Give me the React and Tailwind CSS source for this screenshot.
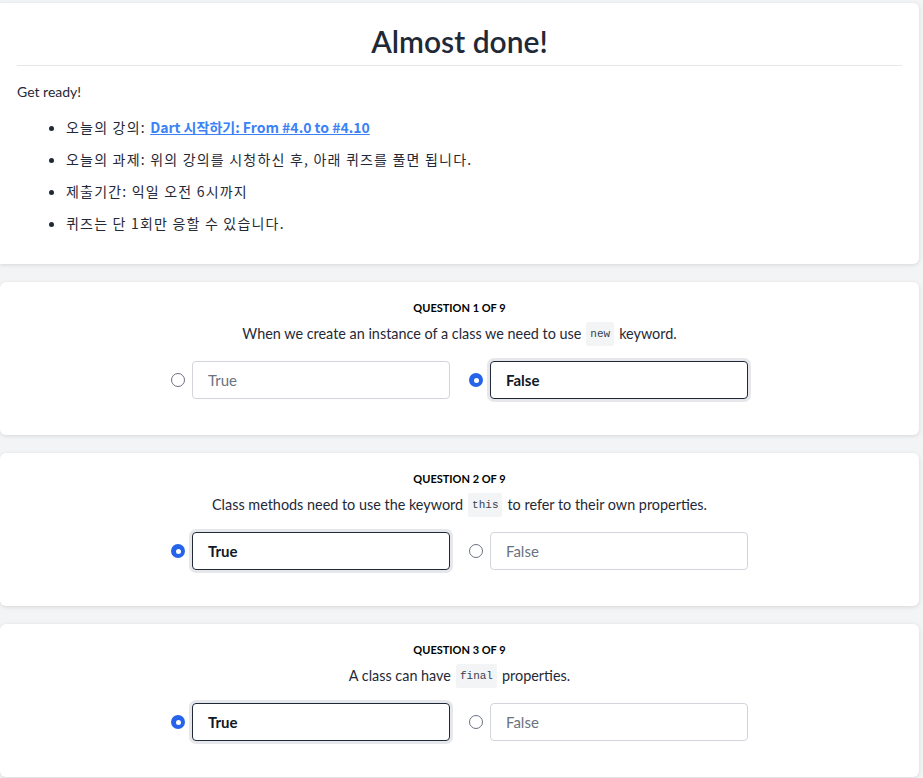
import React from "react";

const questions = [
  {
    n: 1,
    before: "When we create an instance of a class we need to use",
    code: "new",
    after: "keyword.",
    answer: "False",
  },
  {
    n: 2,
    before: "Class methods need to use the keyword",
    code: "this",
    after: "to refer to their own properties.",
    answer: "True",
  },
  {
    n: 3,
    before: "A class can have",
    code: "final",
    after: "properties.",
    answer: "True",
  },
];

function Radio({ checked }) {
  return checked ? (
    <span className="size-[14px] shrink-0 rounded-full bg-[#2563eb] flex items-center justify-center">
      <span className="size-[5px] rounded-full bg-white" />
    </span>
  ) : (
    <span className="size-[14px] shrink-0 rounded-full border border-[#6b7280] bg-white" />
  );
}

function Option({ label, checked }) {
  return (
    <label className="flex items-center gap-[7px]">
      <Radio checked={checked} />
      <div
        className={
          checked
            ? "w-[258px] h-[38px] flex items-center px-[15px] rounded-[4px] border border-[#1f2937] ring-[3px] ring-[#e5e7eb] text-[15px] font-bold text-[#111827]"
            : "w-[258px] h-[38px] flex items-center px-[15px] rounded-[4px] border border-[#d1d5db] text-[15px] text-[#6b7280]"
        }
      >
        {label}
      </div>
    </label>
  );
}

function Question({ q }) {
  return (
    <div className="bg-white rounded-md shadow-[0_1px_4px_rgba(0,0,0,0.12)] pt-[20px] pb-[36px] flex flex-col items-center">
      <h3 className="text-[11px] font-bold uppercase text-black leading-none">
        Question {q.n} of 9
      </h3>
      <p className="mt-[9px] text-[14.4px] text-[#1f2937] leading-5 flex items-center gap-[5px]">
        <span>{q.before}</span>
        <code className="font-['Liberation_Mono',monospace] text-[11px] bg-[#f3f4f6] px-[4px] py-[2px] rounded-[2px] text-[#374151]">
          {q.code}
        </code>
        <span>{q.after}</span>
      </p>
      <div className="mt-[15px] flex items-center gap-[19px]">
        <Option label="True" checked={q.answer === "True"} />
        <Option label="False" checked={q.answer === "False"} />
      </div>
    </div>
  );
}

export default function App() {
  return (
    <div className="min-h-screen bg-[#f3f4f6] pt-[3px] pr-[4px] flex flex-col gap-[18px] font-['Lato','Noto_Sans_CJK_KR',sans-serif] text-[#1f2937]">
      <div className="bg-white rounded-r-md shadow-[0_1px_4px_rgba(0,0,0,0.12)] px-[17px] pt-[20px] pb-[31px]">
        <h1 className="text-center text-[30px] font-semibold text-[#1f2937] leading-9 pb-[6px] border-b border-[#e5e7eb]">
          Almost done!
        </h1>
        <p className="mt-[15px] text-[14px]">Get ready!</p>
        <ul className="mt-[15px] list-disc pl-[49px] text-[14px] flex flex-col gap-[12px] font-['Noto_Sans_CJK_KR',sans-serif] tracking-[1.2px]">
          <li className="leading-5">
            오늘의 강의:{" "}
            <a href="#" className="text-[#3b82f6] font-semibold underline tracking-normal">
              Dart 시작하기: From #4.0 to #4.10
            </a>
          </li>
          <li className="leading-5">오늘의 과제: 위의 강의를 시청하신 후, 아래 퀴즈를 풀면 됩니다.</li>
          <li className="leading-5">제출기간: 익일 오전 6시까지</li>
          <li className="leading-5">퀴즈는 단 1회만 응할 수 있습니다.</li>
        </ul>
      </div>
      {questions.map((q) => (
        <Question key={q.n} q={q} />
      ))}
    </div>
  );
}
